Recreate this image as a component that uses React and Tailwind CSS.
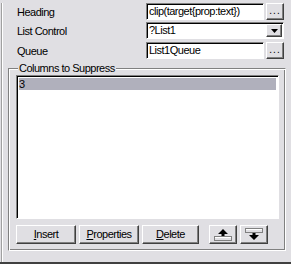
import React from 'react';

const font = "font-['Liberation_Sans',Arial,sans-serif] text-[11px] leading-none tracking-[-0.5px] text-black";

// classic raised 3D button edge
const raised =
  'bg-[#e0dfe3] border border-t-white border-l-white border-r-[#404040] border-b-[#404040] shadow-[inset_-1px_-1px_0_#808080]';
// classic sunken field edge
const sunken =
  'bg-white border border-t-[#808080] border-l-[#808080] border-r-white border-b-white shadow-[inset_1px_1px_0_#000]';

const DotsButton = () => (
  <div className={`${raised} w-[18px] h-[17px] flex items-end justify-center pb-[3px]`}>
    <span className="text-[10px] leading-none tracking-[1px]">...</span>
  </div>
);

const Field = ({ value }) => (
  <div className={`${sunken} w-[118px] h-[17px] flex items-center px-[2px] overflow-hidden whitespace-nowrap`}>
    {value}
  </div>
);

const Row = ({ label, className = '', children }) => (
  <div className={`flex items-center h-[17px] ${className}`}>
    <div className="w-[143px] shrink-0 pl-[14px] pt-[2px]">{label}</div>
    <div className="flex items-center gap-[2px]">{children}</div>
  </div>
);

const Btn = ({ w, children }) => (
  <div className={`${raised} h-[19px] flex items-center justify-center ${w}`}>{children}</div>
);

const UpIcon = () => (
  <svg width="20" height="13" viewBox="0 0 20 13">
    <path d="M10 1 L15 6 L11.5 6 L11.5 8 L8.5 8 L8.5 6 L5 6 Z" fill="#000" />
    <rect x="1.5" y="8.5" width="17" height="4" fill="none" stroke="#808080" />
    <line x1="2" y1="9.5" x2="18" y2="9.5" stroke="#fff" />
  </svg>
);

const DownIcon = () => (
  <svg width="20" height="13" viewBox="0 0 20 13">
    <rect x="1.5" y="0.5" width="17" height="4" fill="none" stroke="#808080" />
    <line x1="2" y1="1.5" x2="18" y2="1.5" stroke="#fff" />
    <path d="M8.5 5 L11.5 5 L11.5 7 L15 7 L10 12 L5 7 L8.5 7 Z" fill="#000" />
  </svg>
);

export default function App() {
  return (
    <div className={`${font} w-[291px] h-[264px] bg-[#e0dfe3] overflow-hidden`}>
      <div className="ml-[2px] h-[259px] border-l border-l-white shadow-[-1px_0_0_#a0a0a0]">
        <Row label="Heading" className="mt-[3px]">
          <Field value="clip(target{prop:text})" />
          <DotsButton />
        </Row>
        <Row label="List Control" className="mt-[2px]">
          <div className={`${sunken} w-[138px] h-[17px] flex items-center justify-between pl-[2px] pr-[1px]`}>
            <span>?List1</span>
            <div className={`${raised} w-[16px] h-[13px] flex items-center justify-center`}>
              <svg width="7" height="4" viewBox="0 0 7 4">
                <path d="M0 0 H7 L3.5 4 Z" fill="#000" />
              </svg>
            </div>
          </div>
        </Row>
        <Row label="Queue" className="mt-[3px]">
          <Field value="List1Queue" />
          <DotsButton />
        </Row>

        {/* Columns to Suppress group */}
        <div className="relative mt-[9px] ml-[5px] w-[278px] h-[183px] border border-t-[#808080] border-l-[#808080] border-r-white border-b-white shadow-[inset_1px_1px_0_#fff,inset_-1px_-1px_0_#808080]">
          <span className="absolute -top-[6px] left-[9px] bg-[#e0dfe3] px-[1px]">Columns to Suppress</span>
          <div className="pt-[6px] pl-[7px] pr-[6px]">
            <div className={`${sunken} h-[144px] pt-[2px] px-[2px]`}>
              <div className="bg-[#b0b0bc] h-[12px] flex items-center">3</div>
            </div>
            <div className="flex items-center mt-[6px] gap-[3px]">
              <Btn w="w-[60px]"><span><u>I</u>nsert</span></Btn>
              <Btn w="w-[60px]"><span><u>P</u>roperties</span></Btn>
              <Btn w="w-[57px]"><span><u>D</u>elete</span></Btn>
              <div className="w-[4px]" />
              <Btn w="w-[28px]"><UpIcon /></Btn>
              <Btn w="w-[28px]"><DownIcon /></Btn>
            </div>
          </div>
        </div>
      </div>
      <div className="h-[2px] bg-[#404040]" />
    </div>
  );
}
